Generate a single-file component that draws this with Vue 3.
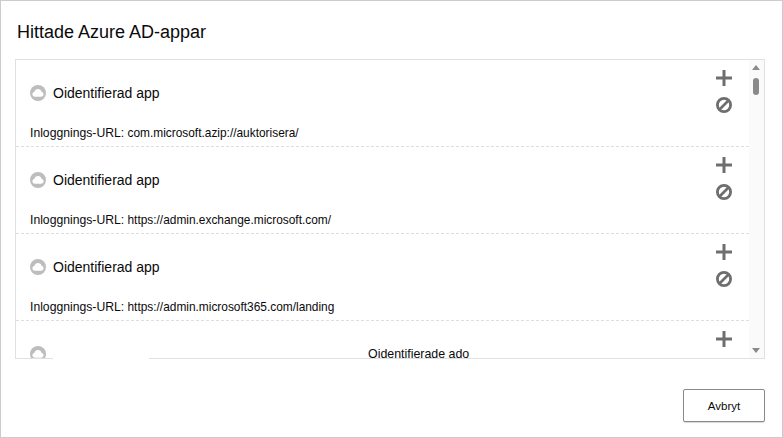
<template>
  <div class="dialog">
    <h1 class="title">Hittade Azure AD-appar</h1>
    <div class="listbox">
      <ul class="apps">
        <li v-for="(app, i) in apps" :key="i" class="app">
          <div class="app-main">
            <div class="app-name">
              <svg class="cloud" width="16" height="16" viewBox="0 0 16 16">
                <circle cx="8" cy="8" r="8" fill="#bdbdbd" />
                <path d="M5 11.800c-1.500 0-2.600-1.100-2.600-2.500 0-1.200.8-2.200 1.900-2.400C4.800 5 6.200 3.900 8 3.900s3.200 1.100 3.700 3c1.100.2 1.900 1.200 1.900 2.400 0 1.400-1.100 2.500-2.600 2.500z" fill="#fff" />
              </svg>
              <span v-if="app.name">{{ app.name }}</span>
            </div>
            <div v-if="app.url" class="app-url"><span class="url-label">Inloggnings-URL:</span> {{ app.url }}</div>
          </div>
          <div class="app-actions">
            <svg width="16" height="16" viewBox="0 0 16 16">
              <path d="M8 0v16M0 8h16" stroke="#6e6e6e" stroke-width="3" fill="none" />
            </svg>
            <svg width="16" height="16" viewBox="0 0 16 16">
              <circle cx="8" cy="8" r="6.600" stroke="#6e6e6e" stroke-width="2.800" fill="none" />
              <path d="M3.500 12.500l9-9" stroke="#6e6e6e" stroke-width="2.600" fill="none" />
            </svg>
          </div>
        </li>
      </ul>
      <div class="scrollbar">
        <span class="arrow up"></span>
        <span class="thumb"></span>
        <span class="arrow down"></span>
      </div>
    </div>
    <span class="patch"></span>
    <span class="caption">Oidentifierade ado</span>
    <div class="footer">
      <button class="cancel" type="button">Avbryt</button>
    </div>
  </div>
</template>

<script setup>
const apps = [
  { name: "Oidentifierad app", url: "com.microsoft.azip://auktorisera/" },
  { name: "Oidentifierad app", url: "https://admin.exchange.microsoft.com/" },
  { name: "Oidentifierad app", url: "https://admin.microsoft365.com/landing" },
  { name: "", url: "" },
];
</script>

<style>
html,
body {
  margin: 0;
  background: #fff;
}
</style>

<style scoped>
.dialog {
  position: relative;
  box-sizing: border-box;
  width: 783px;
  height: 438px;
  border: 1px solid #cccccc;
  background: #fff;
  font-family: "Liberation Sans", Arial, sans-serif;
  color: #0a0a0a;
  display: flex;
  flex-direction: column;
}
.title {
  margin: 0;
  height: 58px;
  padding-left: 16px;
  line-height: 63px;
  font-size: 18px;
  font-weight: 400;
  color: #0a0a0a;
}
.listbox {
  position: relative;
  box-sizing: border-box;
  width: 750px;
  height: 300px;
  margin-left: 14px;
  border: 1px solid #e0e0e0;
  display: flex;
  overflow: hidden;
}
.apps {
  flex: 1;
  margin: 0;
  padding: 0;
  list-style: none;
  overflow: hidden;
}
.app {
  box-sizing: border-box;
  height: 87px;
  display: flex;
  justify-content: space-between;
  border-bottom: 1px dashed #dedede;
}
.app-main {
  padding-left: 14px;
}
.app-name {
  display: flex;
  align-items: center;
  gap: 7px;
  height: 16px;
  margin-top: 25px;
  font-size: 14px;
}
.cloud {
  flex: none;
}
.app-url {
  margin-top: 25px;
  font-size: 11.900px;
  line-height: 14px;
}
.url-label {
  font-size: 12.200px;
}
.app-actions {
  display: flex;
  flex-direction: column;
  gap: 11px;
  padding: 10px 17px 0 0;
}
.scrollbar {
  position: relative;
  flex: none;
  width: 15px;
  background: #fafafa;
}
.arrow {
  position: absolute;
  left: 3px;
  width: 0;
  height: 0;
  border-left: 4px solid transparent;
  border-right: 4px solid transparent;
}
.up {
  top: 5px;
  border-bottom: 5px solid #8a8a8a;
}
.down {
  bottom: 5px;
  border-top: 5px solid #8a8a8a;
}
.thumb {
  position: absolute;
  top: 18px;
  left: 4px;
  width: 6px;
  height: 17px;
  border-radius: 3px;
  background: #8a8a8a;
}
.patch {
  position: absolute;
  left: 52px;
  top: 356px;
  width: 96px;
  height: 2px;
  background: #fff;
}
.caption {
  position: absolute;
  left: 367px;
  top: 346px;
  font-size: 12.400px;
  line-height: 14px;
  color: #0a0a0a;
}
.footer {
  display: flex;
  justify-content: flex-end;
  padding: 30px 17px 0 0;
}
.cancel {
  box-sizing: border-box;
  width: 82px;
  height: 33px;
  border: 1px solid #8a8a8a;
  border-radius: 2px;
  background: #fff;
  box-shadow: 0 1px 1px rgba(0, 0, 0, 0.15);
  font-family: inherit;
  font-size: 11.500px;
  color: #0a0a0a;
}
</style>
